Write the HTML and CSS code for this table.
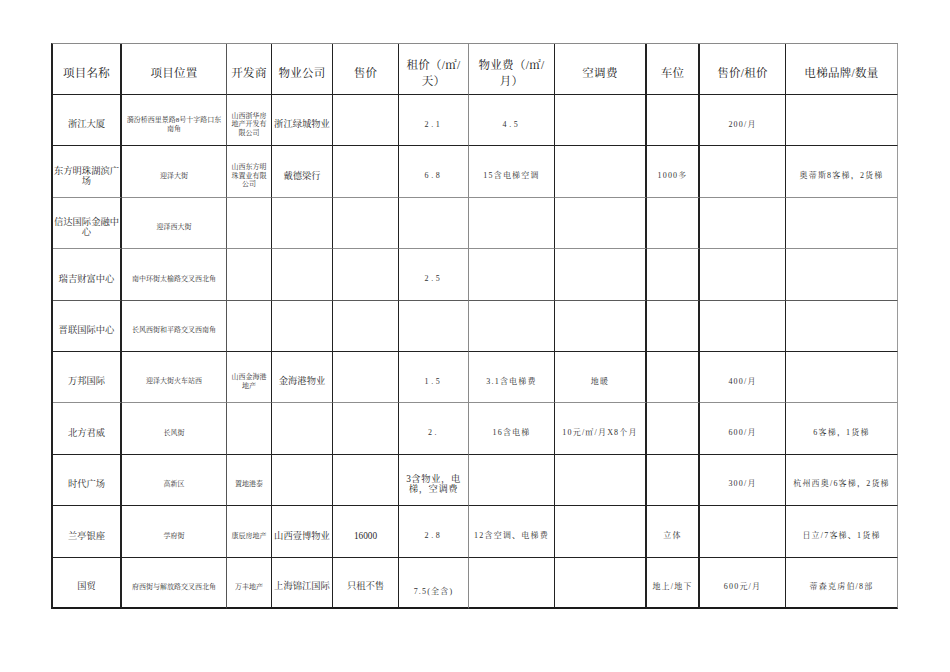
FILE: index.html
```html
<!DOCTYPE html>
<html lang="zh-CN">
<head>
<meta charset="utf-8">
<title>写字楼项目信息表</title>
<link rel="stylesheet" href="styles.css">
</head>
<body>
<table class="sheet">
  <colgroup>
    <col class="c1"><col class="c2"><col class="c3"><col class="c4"><col class="c5"><col class="c6"><col class="c7"><col class="c8"><col class="c9"><col class="c10"><col class="c11">
  </colgroup>
  <thead>
    <tr class="head">
      <th>项目名称</th>
      <th>项目位置</th>
      <th>开发商</th>
      <th>物业公司</th>
      <th>售价</th>
      <th>租价（/㎡/<br>天）</th>
      <th>物业费（/㎡/<br>月）</th>
      <th>空调费</th>
      <th>车位</th>
      <th>售价/租价</th>
      <th>电梯品牌/数量</th>
    </tr>
  </thead>
  <tbody>
    <tr>
      <td class="m">浙江大厦</td>
      <td class="s">漪汾桥西里景路8号十字路口东<br>南角</td>
      <td class="s">山西浙华房<br>地产开发有<br>限公司</td>
      <td class="m">浙江绿城物业</td>
      <td></td>
      <td class="n wide">2.1</td>
      <td class="n wide">4.5</td>
      <td></td>
      <td></td>
      <td class="n">200/月</td>
      <td></td>
    </tr>
    <tr>
      <td class="m">东方明珠湖滨广<br>场</td>
      <td class="s">迎泽大街</td>
      <td class="s">山西东方明<br>珠置业有限<br>公司</td>
      <td class="m">戴德梁行</td>
      <td></td>
      <td class="n wide">6.8</td>
      <td class="n">15含电梯空调</td>
      <td></td>
      <td class="n">1000多</td>
      <td></td>
      <td class="n">奥蒂斯8客梯，2货梯</td>
    </tr>
    <tr>
      <td class="m">信达国际金融中<br>心</td>
      <td class="s">迎泽西大街</td>
      <td></td><td></td><td></td><td></td><td></td><td></td><td></td><td></td><td></td>
    </tr>
    <tr>
      <td class="m">瑞吉财富中心</td>
      <td class="s">南中环街太榆路交叉西北角</td>
      <td></td><td></td><td></td>
      <td class="n wide">2.5</td>
      <td></td><td></td><td></td><td></td><td></td>
    </tr>
    <tr>
      <td class="m">晋联国际中心</td>
      <td class="s">长风西街和平路交叉西南角</td>
      <td></td><td></td><td></td><td></td><td></td><td></td><td></td><td></td><td></td>
    </tr>
    <tr>
      <td class="m">万邦国际</td>
      <td class="s">迎泽大街火车站西</td>
      <td class="s">山西金海港<br>地产</td>
      <td class="m">金海港物业</td>
      <td></td>
      <td class="n wide">1.5</td>
      <td class="n">3.1含电梯费</td>
      <td class="n">地暖</td>
      <td></td>
      <td class="n">400/月</td>
      <td></td>
    </tr>
    <tr>
      <td class="m">北方君威</td>
      <td class="s">长风街</td>
      <td></td><td></td><td></td>
      <td class="n wide">2.</td>
      <td class="n">16含电梯</td>
      <td class="n">10元/㎡/月X8个月</td>
      <td></td>
      <td class="n">600/月</td>
      <td class="n">6客梯，1货梯</td>
    </tr>
    <tr>
      <td class="m">时代广场</td>
      <td class="s">高新区</td>
      <td class="s">置地港泰</td>
      <td></td><td></td>
      <td class="m tight">3含物业，电<br>梯，空调费</td>
      <td></td><td></td><td></td>
      <td class="n">300/月</td>
      <td class="n">杭州西奥/6客梯，2货梯</td>
    </tr>
    <tr>
      <td class="m">兰亭银座</td>
      <td class="s">学府街</td>
      <td class="s">康辰房地产</td>
      <td class="m">山西壹博物业</td>
      <td class="m">16000</td>
      <td class="n wide">2.8</td>
      <td class="n">12含空调、电梯费</td>
      <td></td>
      <td class="n">立体</td>
      <td></td>
      <td class="n">日立/7客梯、1货梯</td>
    </tr>
    <tr class="last">
      <td class="m">国贸</td>
      <td class="s">府西街与解放路交叉西北角</td>
      <td class="s">万丰地产</td>
      <td class="m">上海锦江国际</td>
      <td class="m">只租不售</td>
      <td class="n low">7.5(全含)</td>
      <td></td><td></td>
      <td class="n">地上/地下</td>
      <td class="n">600元/月</td>
      <td class="n">蒂森克虏伯/8部</td>
    </tr>
  </tbody>
</table>
</body>
</html>
```

FILE: styles.css
```css
html, body {
  margin: 0;
  padding: 0;
  background: #ffffff;
}

body {
  padding: 43px 0 0 51px;
  font-family: "Liberation Serif", "Noto Serif CJK SC", "Noto Sans CJK SC", serif;
  color: #2a2a2a;
}

.sheet {
  table-layout: fixed;
  width: 846px;
  border-collapse: separate;
  border-spacing: 0;
  border-top: 1px solid #8a8a8a;
  border-left: 2px solid #222222;
}

.c1 { width: 69px; }
.c2 { width: 105px; }
.c3 { width: 45px; }
.c4 { width: 61px; }
.c5 { width: 66px; }
.c6 { width: 70px; }
.c7 { width: 86px; }
.c8 { width: 92px; }
.c9 { width: 53px; }
.c10 { width: 86px; }
.c11 { width: 112px; }

.sheet th,
.sheet td {
  box-sizing: border-box;
  border-right: 1px solid #222222;
  border-bottom: 1px solid #222222;
  padding: 7px 0 0;
  text-align: center;
  vertical-align: middle;
  white-space: nowrap;
  overflow: visible;
}

.sheet td {
  padding-top: 9px;
}

.sheet th:nth-child(1),
.sheet td:nth-child(1) {
  border-right-width: 2px;
}

.sheet th:nth-child(2),
.sheet td:nth-child(2) {
  border-right-color: #555555;
}

.sheet th:nth-child(6),
.sheet td:nth-child(6) {
  border-right-color: #8a8a8a;
}

.sheet th:nth-child(8),
.sheet td:nth-child(8),
.sheet th:nth-child(9),
.sheet td:nth-child(9) {
  border-right-width: 2px;
}

.sheet th:nth-child(11),
.sheet td:nth-child(11) {
  border-right-color: #9a9a9a;
}

.head th {
  height: 51px;
  font-weight: normal;
  font-size: 11.5px;
  line-height: 16px;
  letter-spacing: 0.3px;
  color: #222222;
}

.sheet tbody tr td {
  height: 51.4px;
}

/* rows whose bottom rule is drawn lighter */
.sheet tbody tr:nth-child(2) td,
.sheet tbody tr:nth-child(3) td,
.sheet tbody tr:nth-child(6) td {
  border-bottom-color: #8f8f8f;
}

.sheet tbody tr:nth-child(4) td {
  border-bottom-color: #5a5a5a;
}

.last td {
  border-bottom: 2px solid #1a1a1a;
}

.m {
  font-size: 9.3px;
  line-height: 10.5px;
  color: #2a2a2a;
}

.tight {
  line-height: 10.6px;
  letter-spacing: 0.6px;
}

.s {
  font-size: 7px;
  line-height: 8.4px;
  color: #333333;
}

.n {
  font-size: 8px;
  line-height: 10px;
  letter-spacing: 1.2px;
  color: #333333;
}

.wide {
  letter-spacing: 2.6px;
  padding-left: 2px;
}

.sheet td.low {
  vertical-align: bottom;
  padding-bottom: 10px;
}
```
